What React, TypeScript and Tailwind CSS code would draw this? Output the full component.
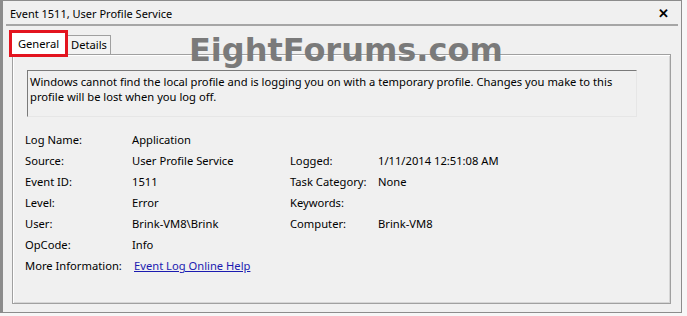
import React from 'react'

const rows: [string, React.ReactNode, string?, string?][] = [
  ['Log Name:', 'Application'],
  ['Source:', 'User Profile Service', 'Logged:', '1/11/2014 12:51:08 AM'],
  ['Event ID:', '1511', 'Task Category:', 'None'],
  ['Level:', 'Error', 'Keywords:', ''],
  ['User:', 'Brink-VM8\\Brink', 'Computer:', 'Brink-VM8'],
  ['OpCode:', 'Info'],
]

const App = () => {
  return (
    <div className="w-[687px] h-[316px] bg-[#f7f7f7] overflow-hidden relative font-['Noto_Sans',sans-serif] text-[11.2px] text-black">
      <div className="w-[682px] h-[313px] border-l-[3px] border-t border-r border-b border-[#8c8c8c] bg-[#f0f0f0] flex flex-col">
        {/* title */}
        <div className="h-[23px] flex items-center justify-between pl-[7px] pr-[12px] pt-[2px]">
          <span className="leading-none text-[11px]">Event 1511, User Profile Service</span>
          <span className="text-[13px] font-bold leading-none">✕</span>
        </div>
        <div className="mx-[3px] h-[2px] bg-[#a6a6a6]" />

        {/* tabs */}
        <div className="flex items-end pl-[6px] h-[28px]">
          <div className="w-[59px] h-[27px] border-[3px] border-[#e3141f] bg-white flex items-center justify-center relative z-10 -mb-[3px]">
            <span className="leading-none">General</span>
          </div>
          <div className="w-[43px] h-[19px] border-t border-r border-[#a0a0a0] bg-[#f3f3f3] flex items-center justify-center">
            <span className="leading-none">Details</span>
          </div>
        </div>

        {/* panel */}
        <div className="ml-[9px] w-[659px] h-[250px] border border-[#a0a0a0] shadow-[inset_1px_1px_0_#ffffff,inset_-1px_-1px_0_#d6d6d6] bg-[#f0f0f0] pt-[15px] pl-[14px]">
          <div className="w-[610px] h-[47px] border-t border-l border-[#7a7a7a] border-b border-r border-b-[#e6e6e6] border-r-[#e6e6e6] pl-[2px] pt-[3px] leading-[15px]">
            Windows cannot find the local profile and is logging you on with a temporary profile. Changes you make to this profile will be lost when you log off.
          </div>

          <div className="mt-[13px] -ml-[2px] grid grid-cols-[107px_158px_88px_1fr] auto-rows-[21px] items-center">
            {rows.map(([l1, v1, l2, v2], i) => (
              <React.Fragment key={i}>
                <span>{l1}</span>
                <span>{v1}</span>
                <span>{l2 ?? ''}</span>
                <span>{v2 ?? ''}</span>
              </React.Fragment>
            ))}
            <span>More Information:</span>
            <span className="pl-[2px]">
              <a href="#" className="text-[#1b1bb0] underline">Event Log Online Help</a>
            </span>
          </div>
        </div>
      </div>

      {/* watermark */}
      <div className="absolute left-[189px] top-[28px] font-['DejaVu_Sans',sans-serif] font-bold text-[32px] text-[#7a7a7a] leading-[44px] pointer-events-none">
        EightForums.com
      </div>
    </div>
  )
}

export default App
